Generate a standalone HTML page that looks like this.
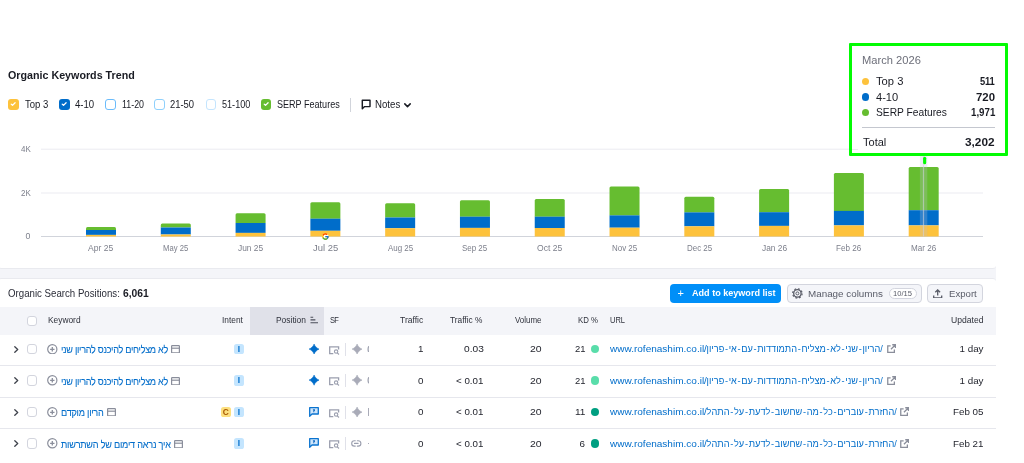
<!DOCTYPE html>
<html lang="en">
<head>
<meta charset="utf-8">
<title>Organic Keywords Trend</title>
<style>
*{box-sizing:border-box;margin:0;padding:0}
html,body{width:1024px;height:463px;overflow:hidden;background:#fff}
body{font-family:"Liberation Sans",sans-serif;color:#191b23;font-size:10.5px;position:relative}
.root{position:absolute;left:0;top:0;width:1024px;height:463px;will-change:transform}
.abs{position:absolute;white-space:nowrap;transform-origin:0 50%}
.card1{position:absolute;left:-2px;top:-10px;width:998px;height:278.8px;background:#fff;border-bottom:1px solid #e9eaef;border-radius:0 0 3.5px 3.5px}
.band{position:absolute;left:0;top:262px;width:996px;height:24px;background:#f4f5f9}
.card2{position:absolute;left:-2px;top:278.3px;width:998px;height:200px;background:#fff;border-top:1px solid #e9eaef;border-radius:3.5px 3.5px 0 0}
.chart{position:absolute;left:0;top:0}
.cb{position:absolute;top:99.2px;width:10.5px;height:10.5px;border-radius:3px}
.cb svg{position:absolute;left:0;top:0}
.tt{position:absolute;left:849.1px;top:42.7px;width:158.8px;height:113px;border:3.1px solid #03fb03;border-radius:1px;background:#fff}
.dot{position:absolute;width:6.6px;height:6.6px;border-radius:50%}
.hdr{position:absolute;left:0;top:307.3px;width:996px;height:27.3px;background:#f4f5f9}
.hdrpos{position:absolute;left:250px;top:307.3px;width:74.1px;height:27.3px;background:#e0e1e9}
.rowline{position:absolute;left:0;width:996px;height:1px;background:#e6e7ed}
.chk{position:absolute;left:26.5px;width:10.6px;height:10.6px;border:1px solid #d3d5de;border-radius:3px;background:#fff}
.badge{position:absolute;width:10.3px;height:10.3px;border-radius:2.6px;font-size:8.4px;font-weight:bold;line-height:10.4px;text-align:center}
.bi{background:#c4e5fe;color:#006dca}
.bc{background:#fcdf7e;color:#a75800}
.btn{position:absolute;top:284px;height:18.5px;border-radius:4px;line-height:18.5px;font-size:10.2px}
</style>
</head>
<body>
<div class="root">
<div class="band"></div>
<div class="card1"></div>
<div class="card2"></div>

<svg class="chart" width="1024" height="270" viewBox="0 0 1024 270">
<rect x="41" y="148.7" width="942" height="1" fill="#ebecf1"/>
<rect x="41" y="192.5" width="942" height="1" fill="#ebecf1"/>
<rect x="41" y="236.0" width="942" height="1" fill="#d1d4db"/>
<path d="M86.00 230.0 V228.4 q0 -1.5 1.5 -1.5 h27 q1.5 0 1.5 1.5 V230.0 z" fill="#66bd30"/>
<rect x="86.00" y="230.0" width="30" height="4.90" fill="#006dca"/>
<rect x="86.00" y="234.9" width="30" height="1.60" fill="#fdc23c"/>
<path d="M160.79 227.5 V224.9 q0 -1.5 1.5 -1.5 h27 q1.5 0 1.5 1.5 V227.5 z" fill="#66bd30"/>
<rect x="160.79" y="227.5" width="30" height="7.00" fill="#006dca"/>
<rect x="160.79" y="234.5" width="30" height="2.00" fill="#fdc23c"/>
<path d="M235.58 223.0 V214.7 q0 -1.5 1.5 -1.5 h27 q1.5 0 1.5 1.5 V223.0 z" fill="#66bd30"/>
<rect x="235.58" y="223.0" width="30" height="9.90" fill="#006dca"/>
<rect x="235.58" y="232.9" width="30" height="3.60" fill="#fdc23c"/>
<path d="M310.37 218.7 V203.8 q0 -1.5 1.5 -1.5 h27 q1.5 0 1.5 1.5 V218.7 z" fill="#66bd30"/>
<rect x="310.37" y="218.7" width="30" height="12.10" fill="#006dca"/>
<rect x="310.37" y="230.8" width="30" height="5.70" fill="#fdc23c"/>
<path d="M385.16 217.5 V204.7 q0 -1.5 1.5 -1.5 h27 q1.5 0 1.5 1.5 V217.5 z" fill="#66bd30"/>
<rect x="385.16" y="217.5" width="30" height="10.70" fill="#006dca"/>
<rect x="385.16" y="228.2" width="30" height="8.30" fill="#fdc23c"/>
<path d="M459.95 216.7 V201.8 q0 -1.5 1.5 -1.5 h27 q1.5 0 1.5 1.5 V216.7 z" fill="#66bd30"/>
<rect x="459.95" y="216.7" width="30" height="11.20" fill="#006dca"/>
<rect x="459.95" y="227.9" width="30" height="8.60" fill="#fdc23c"/>
<path d="M534.74 216.7 V200.6 q0 -1.5 1.5 -1.5 h27 q1.5 0 1.5 1.5 V216.7 z" fill="#66bd30"/>
<rect x="534.74" y="216.7" width="30" height="11.30" fill="#006dca"/>
<rect x="534.74" y="228.0" width="30" height="8.50" fill="#fdc23c"/>
<path d="M609.53 215.4 V187.9 q0 -1.5 1.5 -1.5 h27 q1.5 0 1.5 1.5 V215.4 z" fill="#66bd30"/>
<rect x="609.53" y="215.4" width="30" height="12.30" fill="#006dca"/>
<rect x="609.53" y="227.7" width="30" height="8.80" fill="#fdc23c"/>
<path d="M684.32 212.4 V198.3 q0 -1.5 1.5 -1.5 h27 q1.5 0 1.5 1.5 V212.4 z" fill="#66bd30"/>
<rect x="684.32" y="212.4" width="30" height="13.90" fill="#006dca"/>
<rect x="684.32" y="226.3" width="30" height="10.20" fill="#fdc23c"/>
<path d="M759.11 212.2 V190.6 q0 -1.5 1.5 -1.5 h27 q1.5 0 1.5 1.5 V212.2 z" fill="#66bd30"/>
<rect x="759.11" y="212.2" width="30" height="13.70" fill="#006dca"/>
<rect x="759.11" y="225.9" width="30" height="10.60" fill="#fdc23c"/>
<path d="M833.90 210.9 V174.6 q0 -1.5 1.5 -1.5 h27 q1.5 0 1.5 1.5 V210.9 z" fill="#66bd30"/>
<rect x="833.90" y="210.9" width="30" height="14.50" fill="#006dca"/>
<rect x="833.90" y="225.4" width="30" height="11.10" fill="#fdc23c"/>
<path d="M908.69 210.2 V168.5 q0 -1.5 1.5 -1.5 h27 q1.5 0 1.5 1.5 V210.2 z" fill="#66bd30"/>
<rect x="908.69" y="210.2" width="30" height="15.20" fill="#006dca"/>
<rect x="908.69" y="225.4" width="30" height="11.10" fill="#fdc23c"/>
<rect x="919.9" y="156" width="7.4" height="80.500" fill="#bec1d2" opacity="0.26"/>
<rect x="922.9" y="156" width="1.2" height="80.500" fill="#d0d2dd" opacity="0.6"/>
<rect x="923.1" y="156.800" width="3.1" height="7.400" rx="1.500" fill="#03fb03"/>
<g transform="translate(321.4,232.6) scale(0.1667)">
<circle cx="24" cy="24" r="19" fill="#fff"/>
<path fill="#FFC107" d="M43.6 20.1H42V20H24v8h11.3c-1.6 4.7-6.1 8-11.3 8-6.6 0-12-5.4-12-12s5.4-12 12-12c3.1 0 5.8 1.200 8 3l5.700-5.700C34 6.100 29.300 4 24 4 13 4 4 13 4 24s9 20 20 20 20-9 20-20c0-1.300-.1-2.600-.4-3.900z"/>
<path fill="#FF3D00" d="M6.300 14.700l6.600 4.800C14.700 15.100 19 12 24 12c3.100 0 5.800 1.200 8 3l5.700-5.700C34 6.100 29.300 4 24 4 16.300 4 9.700 8.300 6.300 14.700z"/>
<path fill="#4CAF50" d="M24 44c5.200 0 9.900-2 13.400-5.200l-6.200-5.200A12 12 0 0 1 24 36c-5.200 0-9.600-3.300-11.300-7.900l-6.500 5C9.500 39.600 16.200 44 24 44z"/>
<path fill="#1976D2" d="M43.600 20.100H42V20H24v8h11.300a12 12 0 0 1-4.100 5.600l6.200 5.200C37 39.200 44 34 44 24c0-1.300-.1-2.600-.4-3.900z"/>
</g>
</svg>
<div class="abs" style="left:88.40px;top:241.00px;font-size:8.7px;line-height:14px;transform:scaleX(0.9831);color:#7c7f8b;">Apr 25</div>
<div class="abs" style="left:163.19px;top:241.00px;font-size:8.7px;line-height:14px;transform:scaleX(0.8833);color:#7c7f8b;">May 25</div>
<div class="abs" style="left:237.98px;top:241.00px;font-size:8.7px;line-height:14px;transform:scaleX(0.9647);color:#7c7f8b;">Jun 25</div>
<div class="abs" style="left:312.77px;top:241.00px;font-size:8.7px;line-height:14px;transform:scaleX(1.0855);color:#7c7f8b;">Jul 25</div>
<div class="abs" style="left:387.56px;top:241.00px;font-size:8.7px;line-height:14px;transform:scaleX(0.9139);color:#7c7f8b;">Aug 25</div>
<div class="abs" style="left:462.35px;top:241.00px;font-size:8.7px;line-height:14px;transform:scaleX(0.9139);color:#7c7f8b;">Sep 25</div>
<div class="abs" style="left:537.14px;top:241.00px;font-size:8.7px;line-height:14px;transform:scaleX(0.9833);color:#7c7f8b;">Oct 25</div>
<div class="abs" style="left:611.93px;top:241.00px;font-size:8.7px;line-height:14px;transform:scaleX(0.9142);color:#7c7f8b;">Nov 25</div>
<div class="abs" style="left:686.72px;top:241.00px;font-size:8.7px;line-height:14px;transform:scaleX(0.9142);color:#7c7f8b;">Dec 25</div>
<div class="abs" style="left:761.51px;top:241.00px;font-size:8.7px;line-height:14px;transform:scaleX(0.9647);color:#7c7f8b;">Jan 26</div>
<div class="abs" style="left:836.30px;top:241.00px;font-size:8.7px;line-height:14px;transform:scaleX(0.9304);color:#7c7f8b;">Feb 26</div>
<div class="abs" style="left:911.09px;top:241.00px;font-size:8.7px;line-height:14px;transform:scaleX(0.9306);color:#7c7f8b;">Mar 26</div>
<div class="abs" style="left:20.60px;top:142.20px;font-size:8.7px;line-height:14px;transform:scaleX(0.9209);color:#7c7f8b;">4K</div>
<div class="abs" style="left:20.60px;top:185.50px;font-size:8.7px;line-height:14px;transform:scaleX(0.9209);color:#7c7f8b;">2K</div>
<div class="abs" style="left:25.56px;top:228.80px;font-size:8.7px;line-height:14px;color:#7c7f8b;">0</div>
<div class="abs" style="left:8.20px;top:67.70px;font-size:10.6px;line-height:14px;transform:scaleX(1.0106);font-weight:bold;">Organic Keywords Trend</div>
<div class="cb" style="left:8.3px;background:#fdc23c;"><svg width="10.5" height="10.5" viewBox="0 0 10.5 10.5"><path d="M3.2 5.1 L4.5 6.4 L7.1 3.7" fill="none" stroke="#fff" stroke-width="1.25" stroke-linecap="round" stroke-linejoin="round"/></svg></div>
<div class="abs" style="left:24.60px;top:97.60px;font-size:10.0px;line-height:14px;transform:scaleX(0.9524);">Top 3</div>
<div class="cb" style="left:59.4px;background:#006dca;"><svg width="10.5" height="10.5" viewBox="0 0 10.5 10.5"><path d="M3.2 5.1 L4.5 6.4 L7.1 3.7" fill="none" stroke="#fff" stroke-width="1.25" stroke-linecap="round" stroke-linejoin="round"/></svg></div>
<div class="abs" style="left:75.30px;top:97.60px;font-size:10.0px;line-height:14px;transform:scaleX(0.9593);">4-10</div>
<div class="cb" style="left:105.2px;background:#fff;border:1.3px solid #6bbcfb;"></div>
<div class="abs" style="left:121.60px;top:97.60px;font-size:10.0px;line-height:14px;transform:scaleX(0.8858);">11-20</div>
<div class="cb" style="left:154.1px;background:#fff;border:1.3px solid #8fd0fc;"></div>
<div class="abs" style="left:170.40px;top:97.60px;font-size:10.0px;line-height:14px;transform:scaleX(0.9422);">21-50</div>
<div class="cb" style="left:205.5px;background:#fff;border:1.3px solid #c4e5fe;"></div>
<div class="abs" style="left:221.60px;top:97.60px;font-size:10.0px;line-height:14px;transform:scaleX(0.9088);">51-100</div>
<div class="cb" style="left:260.6px;background:#66bd30;"><svg width="10.5" height="10.5" viewBox="0 0 10.5 10.5"><path d="M3.2 5.1 L4.5 6.4 L7.1 3.7" fill="none" stroke="#fff" stroke-width="1.25" stroke-linecap="round" stroke-linejoin="round"/></svg></div>
<div class="abs" style="left:276.80px;top:97.60px;font-size:10.0px;line-height:14px;transform:scaleX(0.9048);">SERP Features</div>
<div style="position:absolute;left:350px;top:97.5px;width:1px;height:14px;background:#d1d4db"></div>
<svg class="abs" style="left:361.2px;top:98.6px" width="10" height="11" viewBox="0 0 10 11"><path d="M1.300 1.200 H9 V7.600 H3.600 L1.300 9.800 Z" fill="none" stroke="#191b23" stroke-width="1.450" stroke-linejoin="round"/></svg>
<div class="abs" style="left:374.90px;top:97.60px;font-size:10.0px;line-height:14px;transform:scaleX(0.9647);">Notes</div>
<svg class="abs" style="left:404.1px;top:102.6px" width="7" height="5" viewBox="0 0 7 5"><path d="M0.8 0.9 L3.5 3.6 L6.2 0.9" fill="none" stroke="#191b23" stroke-width="1.5" stroke-linecap="round" stroke-linejoin="round"/></svg>
<div class="tt"></div>
<div style="position:absolute;left:852px;top:148.7px;width:5.6px;height:1px;background:#ebecf1"></div>
<div class="abs" style="left:862.30px;top:53.40px;font-size:10.8px;line-height:14px;transform:scaleX(1.0327);color:#6c6e79;">March 2026</div>
<div class="dot" style="left:862.1px;top:77.8px;width:7.4px;height:7.4px;background:#fdc23c"></div>
<div class="abs" style="left:875.60px;top:74.00px;font-size:10.9px;line-height:14px;transform:scaleX(1.0276);">Top 3</div>
<div class="abs" style="left:980.00px;top:74.00px;font-size:10.9px;line-height:14px;letter-spacing:-0.188px;transform:scaleX(0.8600);font-weight:bold;">511</div>
<div class="dot" style="left:862.1px;top:93.3px;width:7.4px;height:7.4px;background:#006dca"></div>
<div class="abs" style="left:875.60px;top:90.40px;font-size:10.9px;line-height:14px;transform:scaleX(1.0176);">4-10</div>
<div class="abs" style="left:975.80px;top:90.40px;font-size:10.9px;line-height:14px;transform:scaleX(1.0447);font-weight:bold;">720</div>
<div class="dot" style="left:862.1px;top:108.9px;width:7.4px;height:7.4px;background:#66bd30"></div>
<div class="abs" style="left:875.60px;top:105.20px;font-size:10.9px;line-height:14px;transform:scaleX(0.9400);">SERP Features</div>
<div class="abs" style="left:970.50px;top:105.20px;font-size:10.9px;line-height:14px;transform:scaleX(0.8909);font-weight:bold;">1,971</div>
<div style="position:absolute;left:862px;top:126.6px;width:133px;height:1px;background:#c4c7cf"></div>
<div class="abs" style="left:862.50px;top:134.50px;font-size:10.9px;line-height:14px;transform:scaleX(1.0120);">Total</div>
<div class="abs" style="left:965.20px;top:134.70px;font-size:11.1px;line-height:14px;transform:scaleX(1.0656);font-weight:bold;">3,202</div>
<div class="abs" style="left:8.20px;top:287.00px;font-size:10.2px;line-height:14px;transform:scaleX(0.9498);color:#2b2d38;">Organic Search Positions:</div>
<div class="abs" style="left:122.80px;top:287.00px;font-size:10.2px;line-height:14px;transform:scaleX(1.0108);font-weight:bold;">6,061</div>
<div class="hdr"></div><div class="hdrpos"></div>
<div class="chk" style="top:315.6px"></div>
<div class="abs" style="left:47.60px;top:312.90px;font-size:8.7px;line-height:14px;transform:scaleX(0.9631);color:#2e313b;">Keyword</div>
<div class="abs" style="left:222.00px;top:312.90px;font-size:8.7px;line-height:14px;transform:scaleX(0.9602);color:#2e313b;">Intent</div>
<div class="abs" style="left:276.10px;top:312.90px;font-size:8.7px;line-height:14px;transform:scaleX(0.9692);color:#2e313b;">Position</div>
<svg class="abs" style="left:309.7px;top:316.4px" width="8.5" height="8" viewBox="0 0 8.5 8"><path d="M0.5 1.2 H3.2 M0.5 3.9 H5.4 M0.5 6.700 H8" fill="none" stroke="#4a4d5a" stroke-width="1.1"/></svg>
<div class="abs" style="left:330.00px;top:312.90px;font-size:8.7px;line-height:14px;letter-spacing:-0.885px;transform:scaleX(0.8600);color:#2e313b;">SF</div>
<div class="abs" style="left:400.40px;top:312.90px;font-size:8.7px;line-height:14px;transform:scaleX(0.9836);color:#2e313b;">Traffic</div>
<div class="abs" style="left:450.40px;top:312.90px;font-size:8.7px;line-height:14px;transform:scaleX(0.9574);color:#2e313b;">Traffic %</div>
<div class="abs" style="left:514.50px;top:312.90px;font-size:8.7px;line-height:14px;transform:scaleX(0.9132);color:#2e313b;">Volume</div>
<div class="abs" style="left:578.30px;top:312.90px;font-size:8.7px;line-height:14px;transform:scaleX(0.8993);color:#2e313b;">KD %</div>
<div class="abs" style="left:609.60px;top:312.90px;font-size:8.7px;line-height:14px;transform:scaleX(0.8618);color:#2e313b;">URL</div>
<div class="abs" style="left:951.00px;top:312.90px;font-size:8.7px;line-height:14px;transform:scaleX(0.9880);color:#2e313b;">Updated</div>
<svg class="abs" style="left:14.2px;top:345.5px" width="5" height="7" viewBox="0 0 5 7"><path d="M0.8 0.8 L3.7 3.5 L0.8 6.2" fill="none" stroke="#3e424b" stroke-width="1.3" stroke-linecap="round" stroke-linejoin="round"/></svg>
<div class="chk" style="top:343.6px"></div>
<svg class="abs" style="left:47.4px;top:343.7px" width="10.6" height="10.6" viewBox="0 0 10.6 10.6"><circle cx="5.3" cy="5.3" r="4.6" fill="none" stroke="#8a8e9b" stroke-width="1.2"/><path d="M5.3 3.1 V7.5 M3.1 5.3 H7.5" stroke="#8a8e9b" stroke-width="1.3" fill="none"/></svg>
<div class="abs" style="left:60.50px;top:342.00px;font-size:10.6px;line-height:14px;letter-spacing:-0.335px;transform:scaleX(0.8600);color:#006dca;direction:rtl;unicode-bidi:isolate;-webkit-text-stroke:0.1px #006dca;">לא מצליחים להיכנס להריון שני</div>
<svg class="abs" style="left:171.4px;top:345.0px" width="9" height="8.4" viewBox="0 0 9 8.4"><rect x="0.6" y="0.6" width="7.8" height="7.2" rx="0.6" fill="none" stroke="#8a8e9b" stroke-width="1.2"/><path d="M0.6 3.2 H8.4" stroke="#8a8e9b" stroke-width="1.2"/></svg>
<div class="badge bi" style="left:233.7px;top:343.8px">I</div>
<svg class="abs" style="left:308.7px;top:343.9px" width="10.2" height="10.2" viewBox="0 0 10 10"><path d="M5 0 C5.900 2.400 7.600 4.100 10 5 C7.600 5.900 5.900 7.600 5 10 C4.100 7.600 2.400 5.900 0 5 C2.400 4.100 4.100 2.400 5 0 Z" fill="#006dca" stroke="#006dca" stroke-width="0.5" stroke-linejoin="round"/></svg>
<svg class="abs" style="left:329.4px;top:345.6px" width="10.500" height="9" viewBox="0 0 10.500 9"><path d="M4.300 7.700 H0.700 V0.800 H9.600 V3.600" fill="none" stroke="#9a9eae" stroke-width="1.300"/><circle cx="7.100" cy="5.600" r="1.700" fill="none" stroke="#9a9eae" stroke-width="1.100"/><path d="M8.300 6.800 L10 8.500" stroke="#9a9eae" stroke-width="1.100"/></svg>
<div style="position:absolute;left:345.2px;top:342.5px;width:1.2px;height:13px;background:#e0e1e9"></div>
<svg class="abs" style="left:351.5px;top:343.9px" width="10.2" height="10.2" viewBox="0 0 10 10"><path d="M5 0 C5.900 2.400 7.600 4.100 10 5 C7.600 5.900 5.900 7.600 5 10 C4.100 7.600 2.400 5.900 0 5 C2.400 4.100 4.100 2.400 5 0 Z" fill="#a9abb8" stroke="#a9abb8" stroke-width="0.5" stroke-linejoin="round"/></svg>
<svg class="abs" style="left:367.4px;top:345.6px" width="2" height="6.500" viewBox="0 0 2 6.500"><path d="M1.800 0.200 Q0.400 3.250 1.800 6.300" fill="none" stroke="#a0a3b1" stroke-width="1.300"/></svg>
<div class="abs" style="left:417.95px;top:342.30px;font-size:9.8px;line-height:14px;color:#24262f;">1</div>
<div class="abs" style="left:463.60px;top:342.30px;font-size:9.8px;line-height:14px;transform:scaleX(1.0381);color:#24262f;">0.03</div>
<div class="abs" style="left:529.80px;top:342.30px;font-size:9.8px;line-height:14px;transform:scaleX(1.0641);color:#24262f;">20</div>
<div class="abs" style="left:574.50px;top:342.30px;font-size:9.8px;line-height:14px;transform:scaleX(0.9632);color:#24262f;">21</div>
<div class="dot" style="left:591px;top:344.8px;width:8.400px;height:8.400px;background:#59ddaa"></div>
<div class="abs" style="left:609.60px;top:342.10px;font-size:9.5px;line-height:14px;transform:scaleX(1.0548);color:#006dca;">www.rofenashim.co.il/</div>
<div class="abs" style="left:706.6px;top:342.10px;font-size:9.2px;line-height:14px;color:#006dca">הריון<span style="padding:0 0.68px">-</span>שני<span style="padding:0 0.68px">-</span>לא<span style="padding:0 0.68px">-</span>מצליח<span style="padding:0 0.68px">-</span>התמודדות<span style="padding:0 0.68px">-</span>עם<span style="padding:0 0.68px">-</span>אי<span style="padding:0 0.68px">-</span>פריון/</div>
<svg class="abs" style="left:886.5px;top:344.2px" width="9.200" height="9.200" viewBox="0 0 8.600 8.600"><path d="M3.400 1.700 H0.700 V7.900 H6.900 V5.200" fill="none" stroke="#8a8e9b" stroke-width="1.200"/><path d="M4.900 0.700 H7.900 V3.700 M7.900 0.700 L3.700 4.900" fill="none" stroke="#8a8e9b" stroke-width="1.200"/></svg>
<div class="abs" style="left:959.53px;top:342.30px;font-size:9.8px;line-height:14px;color:#24262f;">1 day</div>
<div class="rowline" style="top:365.2px"></div>
<svg class="abs" style="left:14.2px;top:377.1px" width="5" height="7" viewBox="0 0 5 7"><path d="M0.8 0.8 L3.7 3.5 L0.8 6.2" fill="none" stroke="#3e424b" stroke-width="1.3" stroke-linecap="round" stroke-linejoin="round"/></svg>
<div class="chk" style="top:375.2px"></div>
<svg class="abs" style="left:47.4px;top:375.2px" width="10.6" height="10.6" viewBox="0 0 10.6 10.6"><circle cx="5.3" cy="5.3" r="4.6" fill="none" stroke="#8a8e9b" stroke-width="1.2"/><path d="M5.3 3.1 V7.5 M3.1 5.3 H7.5" stroke="#8a8e9b" stroke-width="1.3" fill="none"/></svg>
<div class="abs" style="left:60.50px;top:373.55px;font-size:10.6px;line-height:14px;letter-spacing:-0.335px;transform:scaleX(0.8600);color:#006dca;direction:rtl;unicode-bidi:isolate;-webkit-text-stroke:0.1px #006dca;">לא מצליחים להיכנס להריון שני</div>
<svg class="abs" style="left:171.4px;top:376.6px" width="9" height="8.4" viewBox="0 0 9 8.4"><rect x="0.6" y="0.6" width="7.8" height="7.2" rx="0.6" fill="none" stroke="#8a8e9b" stroke-width="1.2"/><path d="M0.6 3.2 H8.4" stroke="#8a8e9b" stroke-width="1.2"/></svg>
<div class="badge bi" style="left:233.7px;top:375.4px">I</div>
<svg class="abs" style="left:308.7px;top:375.4px" width="10.2" height="10.2" viewBox="0 0 10 10"><path d="M5 0 C5.900 2.400 7.600 4.100 10 5 C7.600 5.900 5.900 7.600 5 10 C4.100 7.600 2.400 5.900 0 5 C2.400 4.100 4.100 2.400 5 0 Z" fill="#006dca" stroke="#006dca" stroke-width="0.5" stroke-linejoin="round"/></svg>
<svg class="abs" style="left:329.4px;top:377.2px" width="10.500" height="9" viewBox="0 0 10.500 9"><path d="M4.300 7.700 H0.700 V0.800 H9.600 V3.600" fill="none" stroke="#9a9eae" stroke-width="1.300"/><circle cx="7.100" cy="5.600" r="1.700" fill="none" stroke="#9a9eae" stroke-width="1.100"/><path d="M8.300 6.800 L10 8.500" stroke="#9a9eae" stroke-width="1.100"/></svg>
<div style="position:absolute;left:345.2px;top:374.1px;width:1.2px;height:13px;background:#e0e1e9"></div>
<svg class="abs" style="left:351.5px;top:375.4px" width="10.2" height="10.2" viewBox="0 0 10 10"><path d="M5 0 C5.900 2.400 7.600 4.100 10 5 C7.600 5.900 5.900 7.600 5 10 C4.100 7.600 2.400 5.900 0 5 C2.400 4.100 4.100 2.400 5 0 Z" fill="#a9abb8" stroke="#a9abb8" stroke-width="0.5" stroke-linejoin="round"/></svg>
<svg class="abs" style="left:367.4px;top:377.2px" width="2" height="6.500" viewBox="0 0 2 6.500"><path d="M1.800 0.200 Q0.400 3.250 1.800 6.300" fill="none" stroke="#a0a3b1" stroke-width="1.300"/></svg>
<div class="abs" style="left:417.95px;top:373.85px;font-size:9.8px;line-height:14px;color:#24262f;">0</div>
<div class="abs" style="left:456.00px;top:373.85px;font-size:9.8px;line-height:14px;transform:scaleX(0.9957);color:#24262f;">&lt; 0.01</div>
<div class="abs" style="left:529.80px;top:373.85px;font-size:9.8px;line-height:14px;transform:scaleX(1.0641);color:#24262f;">20</div>
<div class="abs" style="left:574.50px;top:373.85px;font-size:9.8px;line-height:14px;transform:scaleX(0.9632);color:#24262f;">21</div>
<div class="dot" style="left:591px;top:376.4px;width:8.400px;height:8.400px;background:#59ddaa"></div>
<div class="abs" style="left:609.60px;top:373.65px;font-size:9.5px;line-height:14px;transform:scaleX(1.0548);color:#006dca;">www.rofenashim.co.il/</div>
<div class="abs" style="left:706.6px;top:373.65px;font-size:9.2px;line-height:14px;color:#006dca">הריון<span style="padding:0 0.68px">-</span>שני<span style="padding:0 0.68px">-</span>לא<span style="padding:0 0.68px">-</span>מצליח<span style="padding:0 0.68px">-</span>התמודדות<span style="padding:0 0.68px">-</span>עם<span style="padding:0 0.68px">-</span>אי<span style="padding:0 0.68px">-</span>פריון/</div>
<svg class="abs" style="left:886.5px;top:375.8px" width="9.200" height="9.200" viewBox="0 0 8.600 8.600"><path d="M3.400 1.700 H0.700 V7.900 H6.900 V5.200" fill="none" stroke="#8a8e9b" stroke-width="1.200"/><path d="M4.900 0.700 H7.900 V3.700 M7.900 0.700 L3.700 4.900" fill="none" stroke="#8a8e9b" stroke-width="1.200"/></svg>
<div class="abs" style="left:959.53px;top:373.85px;font-size:9.8px;line-height:14px;color:#24262f;">1 day</div>
<div class="rowline" style="top:396.8px"></div>
<svg class="abs" style="left:14.2px;top:408.6px" width="5" height="7" viewBox="0 0 5 7"><path d="M0.8 0.8 L3.7 3.5 L0.8 6.2" fill="none" stroke="#3e424b" stroke-width="1.3" stroke-linecap="round" stroke-linejoin="round"/></svg>
<div class="chk" style="top:406.7px"></div>
<svg class="abs" style="left:47.4px;top:406.8px" width="10.6" height="10.6" viewBox="0 0 10.6 10.6"><circle cx="5.3" cy="5.3" r="4.6" fill="none" stroke="#8a8e9b" stroke-width="1.2"/><path d="M5.3 3.1 V7.5 M3.1 5.3 H7.5" stroke="#8a8e9b" stroke-width="1.3" fill="none"/></svg>
<div class="abs" style="left:60.50px;top:405.10px;font-size:10.6px;line-height:14px;letter-spacing:-0.286px;transform:scaleX(0.8600);color:#006dca;direction:rtl;unicode-bidi:isolate;-webkit-text-stroke:0.1px #006dca;">הריון מוקדם</div>
<svg class="abs" style="left:106.8px;top:408.1px" width="9" height="8.4" viewBox="0 0 9 8.4"><rect x="0.6" y="0.6" width="7.8" height="7.2" rx="0.6" fill="none" stroke="#8a8e9b" stroke-width="1.2"/><path d="M0.6 3.2 H8.4" stroke="#8a8e9b" stroke-width="1.2"/></svg>
<div class="badge bc" style="left:220.7px;top:406.9px">C</div>
<div class="badge bi" style="left:233.7px;top:406.9px">I</div>
<svg class="abs" style="left:309px;top:406.8px" width="10" height="10" viewBox="0 0 10 10"><path d="M0.700 0.700 H9.300 V7 H3 L0.700 9.200 Z" fill="#cfe6fb" stroke="#0a73cf" stroke-width="1.300" stroke-linejoin="round"/><path d="M3.900 2.300 H6 V4 H5.300 V5.300 H4.300 V3.300 H3.900 Z" fill="#1b6fc4"/></svg>
<svg class="abs" style="left:329.4px;top:408.7px" width="10.500" height="9" viewBox="0 0 10.500 9"><path d="M4.300 7.700 H0.700 V0.800 H9.600 V3.600" fill="none" stroke="#9a9eae" stroke-width="1.300"/><circle cx="7.100" cy="5.600" r="1.700" fill="none" stroke="#9a9eae" stroke-width="1.100"/><path d="M8.300 6.800 L10 8.500" stroke="#9a9eae" stroke-width="1.100"/></svg>
<div style="position:absolute;left:345.2px;top:405.6px;width:1.2px;height:13px;background:#e0e1e9"></div>
<svg class="abs" style="left:351.5px;top:407.0px" width="10.2" height="10.2" viewBox="0 0 10 10"><path d="M5 0 C5.900 2.400 7.600 4.100 10 5 C7.600 5.900 5.900 7.600 5 10 C4.100 7.600 2.400 5.900 0 5 C2.400 4.100 4.100 2.400 5 0 Z" fill="#a9abb8" stroke="#a9abb8" stroke-width="0.5" stroke-linejoin="round"/></svg>
<div style="position:absolute;left:367.6px;top:407.8px;width:1.5px;height:8.300px;background:#a9abb8"></div>
<div class="abs" style="left:417.95px;top:405.40px;font-size:9.8px;line-height:14px;color:#24262f;">0</div>
<div class="abs" style="left:456.00px;top:405.40px;font-size:9.8px;line-height:14px;transform:scaleX(0.9957);color:#24262f;">&lt; 0.01</div>
<div class="abs" style="left:529.80px;top:405.40px;font-size:9.8px;line-height:14px;transform:scaleX(1.0641);color:#24262f;">20</div>
<div class="abs" style="left:574.50px;top:405.40px;font-size:9.8px;line-height:14px;transform:scaleX(1.0321);color:#24262f;">11</div>
<div class="dot" style="left:591px;top:407.9px;width:8.400px;height:8.400px;background:#009f81"></div>
<div class="abs" style="left:609.60px;top:405.20px;font-size:9.5px;line-height:14px;transform:scaleX(1.0548);color:#006dca;">www.rofenashim.co.il/</div>
<div class="abs" style="left:706.6px;top:405.20px;font-size:9.2px;line-height:14px;color:#006dca">החזרת<span style="padding:0 0.72px">-</span>עוברים<span style="padding:0 0.72px">-</span>כל<span style="padding:0 0.72px">-</span>מה<span style="padding:0 0.72px">-</span>שחשוב<span style="padding:0 0.72px">-</span>לדעת<span style="padding:0 0.72px">-</span>על<span style="padding:0 0.72px">-</span>התהל/</div>
<svg class="abs" style="left:900.3px;top:407.3px" width="9.200" height="9.200" viewBox="0 0 8.600 8.600"><path d="M3.400 1.700 H0.700 V7.900 H6.900 V5.200" fill="none" stroke="#8a8e9b" stroke-width="1.200"/><path d="M4.900 0.700 H7.900 V3.700 M7.900 0.700 L3.700 4.900" fill="none" stroke="#8a8e9b" stroke-width="1.200"/></svg>
<div class="abs" style="left:952.99px;top:405.40px;font-size:9.8px;line-height:14px;color:#24262f;">Feb 05</div>
<div class="rowline" style="top:428.3px"></div>
<svg class="abs" style="left:14.2px;top:440.1px" width="5" height="7" viewBox="0 0 5 7"><path d="M0.8 0.8 L3.7 3.5 L0.8 6.2" fill="none" stroke="#3e424b" stroke-width="1.3" stroke-linecap="round" stroke-linejoin="round"/></svg>
<div class="chk" style="top:438.2px"></div>
<svg class="abs" style="left:47.4px;top:438.3px" width="10.6" height="10.6" viewBox="0 0 10.6 10.6"><circle cx="5.3" cy="5.3" r="4.6" fill="none" stroke="#8a8e9b" stroke-width="1.2"/><path d="M5.3 3.1 V7.5 M3.1 5.3 H7.5" stroke="#8a8e9b" stroke-width="1.3" fill="none"/></svg>
<div class="abs" style="left:60.50px;top:436.65px;font-size:10.6px;line-height:14px;letter-spacing:-0.256px;transform:scaleX(0.8600);color:#006dca;direction:rtl;unicode-bidi:isolate;-webkit-text-stroke:0.1px #006dca;">איך נראה דימום של השתרשות</div>
<svg class="abs" style="left:174.0px;top:439.6px" width="9" height="8.4" viewBox="0 0 9 8.4"><rect x="0.6" y="0.6" width="7.8" height="7.2" rx="0.6" fill="none" stroke="#8a8e9b" stroke-width="1.2"/><path d="M0.6 3.2 H8.4" stroke="#8a8e9b" stroke-width="1.2"/></svg>
<div class="badge bi" style="left:233.7px;top:438.4px">I</div>
<svg class="abs" style="left:309px;top:438.3px" width="10" height="10" viewBox="0 0 10 10"><path d="M0.700 0.700 H9.300 V7 H3 L0.700 9.200 Z" fill="#cfe6fb" stroke="#0a73cf" stroke-width="1.300" stroke-linejoin="round"/><path d="M3.900 2.300 H6 V4 H5.300 V5.300 H4.300 V3.300 H3.900 Z" fill="#1b6fc4"/></svg>
<svg class="abs" style="left:329.4px;top:440.2px" width="10.500" height="9" viewBox="0 0 10.500 9"><path d="M4.300 7.700 H0.700 V0.800 H9.600 V3.600" fill="none" stroke="#9a9eae" stroke-width="1.300"/><circle cx="7.100" cy="5.600" r="1.700" fill="none" stroke="#9a9eae" stroke-width="1.100"/><path d="M8.300 6.800 L10 8.500" stroke="#9a9eae" stroke-width="1.100"/></svg>
<div style="position:absolute;left:345.2px;top:437.1px;width:1.2px;height:13px;background:#e0e1e9"></div>
<svg class="abs" style="left:351.200px;top:440.2px" width="10.600" height="6.800" viewBox="0 0 10.600 6.800"><path d="M4.300 0.700 H3.400 a2.700 2.700 0 0 0 0 5.400 H4.300 M6.300 0.700 H7.200 a2.700 2.700 0 0 1 0 5.400 H6.300 M3.500 3.400 H7.100" fill="none" stroke="#9a9eae" stroke-width="1.100" stroke-linecap="round"/></svg>
<div style="position:absolute;left:368px;top:443.1px;width:1px;height:1px;background:#a9abb8"></div>
<div class="abs" style="left:417.95px;top:436.95px;font-size:9.8px;line-height:14px;color:#24262f;">0</div>
<div class="abs" style="left:456.00px;top:436.95px;font-size:9.8px;line-height:14px;transform:scaleX(0.9957);color:#24262f;">&lt; 0.01</div>
<div class="abs" style="left:529.80px;top:436.95px;font-size:9.8px;line-height:14px;transform:scaleX(1.0641);color:#24262f;">20</div>
<div class="abs" style="left:579.55px;top:436.95px;font-size:9.8px;line-height:14px;color:#24262f;">6</div>
<div class="dot" style="left:591px;top:439.4px;width:8.400px;height:8.400px;background:#009f81"></div>
<div class="abs" style="left:609.60px;top:436.75px;font-size:9.5px;line-height:14px;transform:scaleX(1.0548);color:#006dca;">www.rofenashim.co.il/</div>
<div class="abs" style="left:706.6px;top:436.75px;font-size:9.2px;line-height:14px;color:#006dca">החזרת<span style="padding:0 0.72px">-</span>עוברים<span style="padding:0 0.72px">-</span>כל<span style="padding:0 0.72px">-</span>מה<span style="padding:0 0.72px">-</span>שחשוב<span style="padding:0 0.72px">-</span>לדעת<span style="padding:0 0.72px">-</span>על<span style="padding:0 0.72px">-</span>התהל/</div>
<svg class="abs" style="left:900.3px;top:438.8px" width="9.200" height="9.200" viewBox="0 0 8.600 8.600"><path d="M3.400 1.700 H0.700 V7.900 H6.900 V5.200" fill="none" stroke="#8a8e9b" stroke-width="1.200"/><path d="M4.900 0.700 H7.900 V3.700 M7.900 0.700 L3.700 4.900" fill="none" stroke="#8a8e9b" stroke-width="1.200"/></svg>
<div class="abs" style="left:952.99px;top:436.95px;font-size:9.8px;line-height:14px;color:#24262f;">Feb 21</div>
<div class="btn" style="left:670px;width:111.3px;background:#008ff8"></div>
<div class="abs" style="left:677.60px;top:286.00px;font-size:11px;line-height:14px;color:#fff;">+</div>
<div class="abs" style="left:692.20px;top:285.80px;font-size:9.8px;line-height:14px;transform:scaleX(0.9249);font-weight:bold;color:#fff;">Add to keyword list</div>
<div class="btn" style="left:787px;width:135.2px;background:#f4f5f9;border:1px solid #d3d5de"></div>
<svg class="abs" style="left:791.8px;top:287.8px" width="10.800" height="10.800" viewBox="0 0 10.800 10.800"><circle cx="5.400" cy="5.400" r="3.700" fill="none" stroke="#585b67" stroke-width="1.300"/><circle cx="5.400" cy="5.400" r="4.700" fill="none" stroke="#585b67" stroke-width="1.200" stroke-dasharray="1.850 1.841"/><circle cx="5.400" cy="5.400" r="1.500" fill="none" stroke="#585b67" stroke-width="1"/></svg>
<div class="abs" style="left:808.00px;top:286.70px;font-size:9.7px;line-height:14px;transform:scaleX(1.0153);color:#585b67;">Manage columns</div>
<div style="position:absolute;left:888.900px;top:288px;width:27.700px;height:10.800px;border:1px solid #d3d5de;border-radius:6px;background:#fff"></div>
<div class="abs" style="left:893.40px;top:286.70px;font-size:7.8px;line-height:14px;transform:scaleX(0.9734);color:#585b67;">10/15</div>
<div class="btn" style="left:927.3px;width:55.8px;background:#f4f5f9;border:1px solid #d3d5de"></div>
<svg class="abs" style="left:933.3px;top:288.6px" width="9.400" height="9.600" viewBox="0 0 9.400 9.600"><path d="M4.700 6.400 V1.200 M2.300 3.300 L4.700 0.900 L7.100 3.300 M0.700 6.600 V8.900 H8.700 V6.600" fill="none" stroke="#585b67" stroke-width="1.300"/></svg>
<div class="abs" style="left:949.40px;top:286.70px;font-size:9.7px;line-height:14px;transform:scaleX(0.9916);color:#585b67;">Export</div>





</div>
</body>
</html>
